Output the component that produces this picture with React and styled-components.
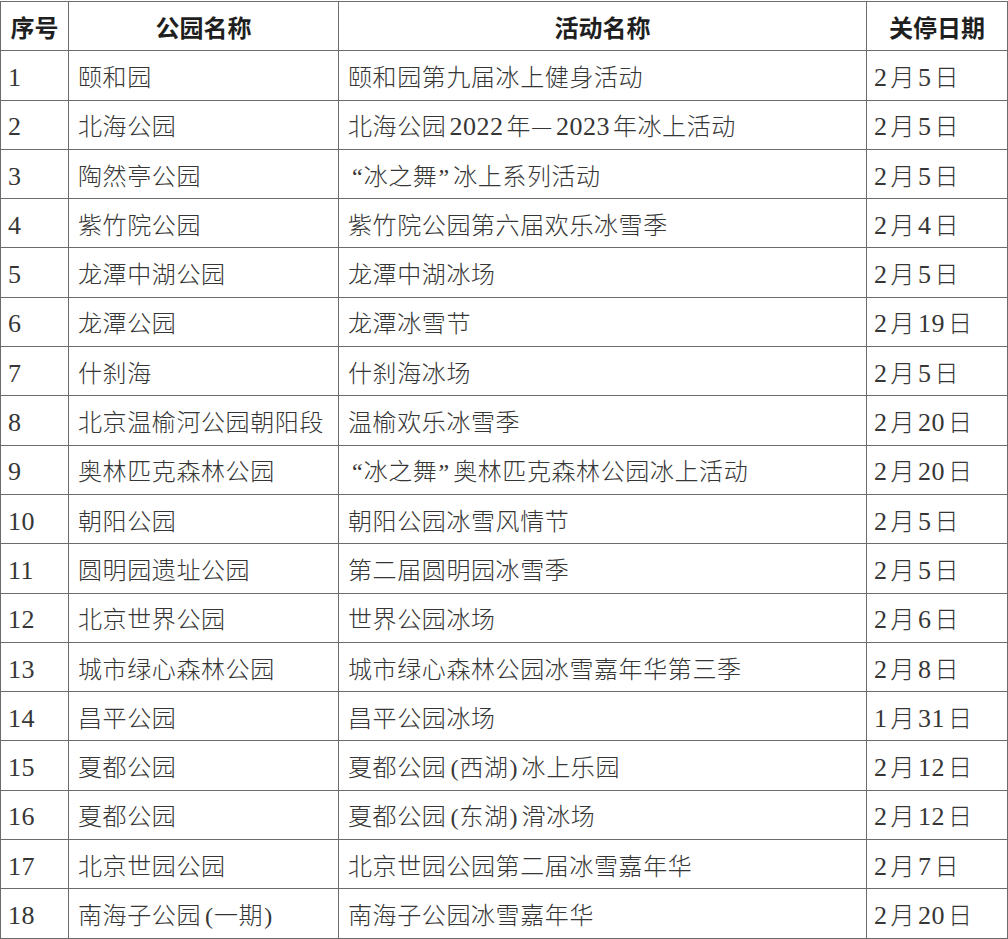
import React from 'react'
import styled, { createGlobalStyle } from 'styled-components'

const rows = [
    ['1', '颐和园', '颐和园第九届冰上健身活动', '2月5日'],
    ['2', '北海公园', '北海公园2022年—2023年冰上活动', '2月5日'],
    ['3', '陶然亭公园', '“冰之舞”冰上系列活动', '2月5日'],
    ['4', '紫竹院公园', '紫竹院公园第六届欢乐冰雪季', '2月4日'],
    ['5', '龙潭中湖公园', '龙潭中湖冰场', '2月5日'],
    ['6', '龙潭公园', '龙潭冰雪节', '2月19日'],
    ['7', '什刹海', '什刹海冰场', '2月5日'],
    ['8', '北京温榆河公园朝阳段', '温榆欢乐冰雪季', '2月20日'],
    ['9', '奥林匹克森林公园', '“冰之舞”奥林匹克森林公园冰上活动', '2月20日'],
    ['10', '朝阳公园', '朝阳公园冰雪风情节', '2月5日'],
    ['11', '圆明园遗址公园', '第二届圆明园冰雪季', '2月5日'],
    ['12', '北京世界公园', '世界公园冰场', '2月6日'],
    ['13', '城市绿心森林公园', '城市绿心森林公园冰雪嘉年华第三季', '2月8日'],
    ['14', '昌平公园', '昌平公园冰场', '1月31日'],
    ['15', '夏都公园', '夏都公园(西湖)冰上乐园', '2月12日'],
    ['16', '夏都公园', '夏都公园(东湖)滑冰场', '2月12日'],
    ['17', '北京世园公园', '北京世园公园第二届冰雪嘉年华', '2月7日'],
    ['18', '南海子公园(一期)', '南海子公园冰雪嘉年华', '2月20日'],
]

const GlobalStyle = createGlobalStyle`
    html, body {
        margin: 0;
        padding: 0;
        background: #fff;
    }
`

// digits and punctuation from the serif face, hanzi from the CJK sans
const spaced = (text, edge) =>
    text.split(/(\d+|[“”()])/).map((part, i) => {
        if (/^\d+$/.test(part)) return <Num key={i} $edge={edge && i === 1}>{part}</Num>
        if (/^[“”()]$/.test(part)) return <Punct key={i} $open={part === '“' || part === '('}>{part}</Punct>
        return part
    })

const App = () => {
    return (
        <>
            <GlobalStyle />
            <Table>
                <colgroup>
                    <col style={{ width: 68 }} />
                    <col style={{ width: 270 }} />
                    <col style={{ width: 528 }} />
                    <col style={{ width: 141 }} />
                </colgroup>
                <thead>
                    <Row>
                        <Head>序号</Head>
                        <Head>公园名称</Head>
                        <Head>活动名称</Head>
                        <Head>关停日期</Head>
                    </Row>
                </thead>
                <tbody>
                    {rows.map((r) => (
                        <Row key={r[0]}>
                            <Cell $pad="7px"><Num $edge>{r[0]}</Num></Cell>
                            <Cell>{spaced(r[1])}</Cell>
                            <Cell>{spaced(r[2])}</Cell>
                            <Cell $pad="7px">{spaced(r[3], true)}</Cell>
                        </Row>
                    ))}
                </tbody>
            </Table>
        </>
    )
}

const Table = styled.table`
    width: 1007px;
    table-layout: fixed;
    border-collapse: collapse;
    margin-top: 1px;
    color: #363636;
`

const Row = styled.tr`
    height: 49.3px;
`

const Head = styled.th`
    border: 1.5px solid #6b6b6b;
    padding: 0;
    font-family: "Noto Sans CJK SC", sans-serif;
    font-weight: 700;
    font-size: 24px;
    color: #1f1f1f;
    text-align: center;
    vertical-align: middle;
    white-space: nowrap;
`

const Cell = styled.td`
    border: 1.5px solid #6b6b6b;
    padding: 0 0 0 ${(p) => p.$pad || '9px'};
    font-family: "Noto Sans CJK SC", sans-serif;
    font-weight: 300;
    font-size: 24px;
    letter-spacing: 0.6px;
    text-align: left;
    vertical-align: middle;
    white-space: nowrap;
    overflow: hidden;
`

const Num = styled.span`
    font-family: "Liberation Serif", serif;
    font-size: 26px;
    letter-spacing: 0.5px;
    margin: 0 3px 0 ${(p) => (p.$edge ? '0' : '3px')};
`

const Punct = styled.span`
    font-family: "Liberation Serif", serif;
    font-size: 24px;
    letter-spacing: 0;
    margin: ${(p) => (p.$open ? '0 1px 0 4px' : '0 4px 0 1px')};
`

export default App
